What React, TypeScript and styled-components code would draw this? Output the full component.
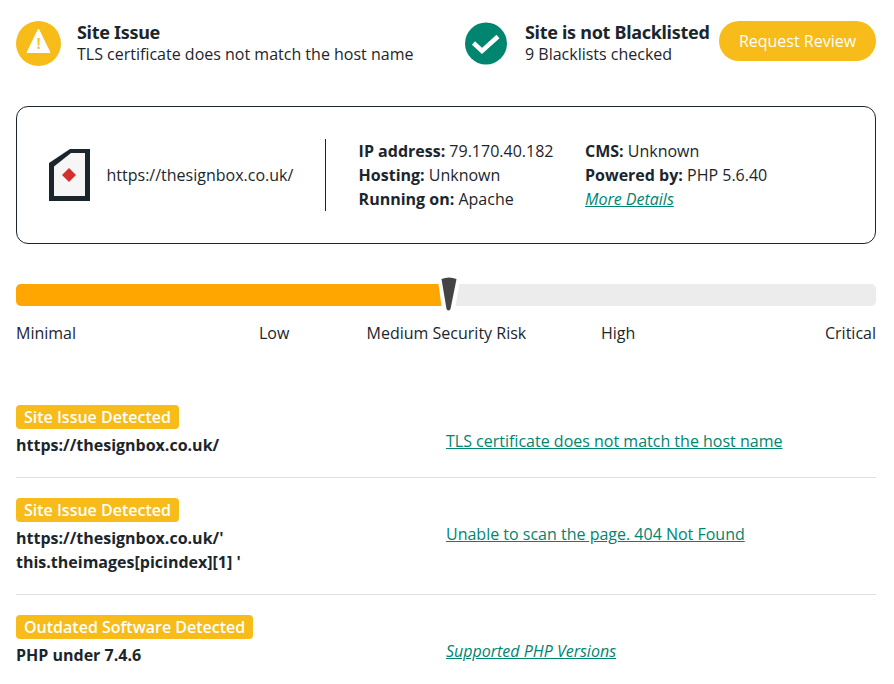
import React from "react";
import styled, { createGlobalStyle } from "styled-components";

const Global = createGlobalStyle`
  html, body { margin: 0; padding: 0; background: #fff; }
  body { font-family: "Open Sans", "Noto Sans", sans-serif; color: #1b262c; font-size: 16px; }
`;

const Page = styled.div`
  width: 860px;
  padding: 21px 18px 0 16px;
  height: 663px;
  overflow: hidden;
`;

const TopRow = styled.div`
  display: flex;
  align-items: flex-start;
  height: 45px;
`;

const Status = styled.div<{ $width: number }>`
  display: flex;
  align-items: center;
  gap: ${(p) => (p.$width > 300 ? 16 : 18)}px;
  width: ${(p) => p.$width}px;
  height: 45px;
`;

const StatusText = styled.div`
  display: flex;
  flex-direction: column;
  white-space: nowrap;
  padding-bottom: 2px;
`;

const StatusTitle = styled.div`
  font-family: "Noto Sans", sans-serif;
  font-weight: 700;
  font-size: 18px;
  letter-spacing: -0.3px;
  line-height: 22px;
`;

const StatusSub = styled.div`
  font-size: 16px;
  line-height: 22px;
`;

const Button = styled.button`
  width: 157px;
  height: 40px;
  margin-left: auto;
  border: 0;
  border-radius: 20px;
  background: #f7bc19;
  color: #fff;
  font-family: "Open Sans", sans-serif;
  font-size: 16px;
  padding: 0;
`;

const Card = styled.div`
  margin-top: 40px;
  height: 136px;
  border: 1px solid #1b262c;
  border-radius: 12px;
  display: flex;
  align-items: center;
  padding-left: 32px;
`;

const UrlBlock = styled.div`
  display: flex;
  align-items: center;
  gap: 16.5px;
  width: 276px;
  height: 72px;
  border-right: 1px solid #1b262c;
`;

const InfoCol = styled.div<{ $width: number }>`
  width: ${(p) => p.$width}px;
  line-height: 24px;
  white-space: nowrap;
`;

const InfoWrap = styled.div`
  display: flex;
  padding-left: 32.6px;
`;

const InfoLine = styled.div``;

const Strong = styled.b`
  font-weight: 700;
`;

const DetailLink = styled.a`
  color: #00856f;
  font-style: italic;
  text-decoration: underline;
`;

const Meter = styled.div`
  margin-top: 40px;
  position: relative;
  height: 22px;
  background: #ececec;
  border-radius: 5px;
`;

const MeterFill = styled.div`
  height: 100%;
  background: #ffa600;
  border-radius: 5px 0 0 5px;
`;

const Needle = styled.svg`
  position: absolute;
  left: 421px;
  top: -8px;
`;

const Scale = styled.div`
  margin-top: 16px;
  display: grid;
  grid-template-columns: 243px 107.6px 234.4px 224px 51px;
  white-space: nowrap;
  line-height: 22px;
`;

const ScaleLabel = styled.span``;

const Issues = styled.div`
  margin-top: 41px;
`;

const Issue = styled.div<{ $last?: boolean }>`
  display: flex;
  padding: 20px 0;
  border-bottom: ${(p) => (p.$last ? "0" : "1px solid #e0e0e0")};
`;

const IssueLeft = styled.div`
  width: 430px;
`;

const Badge = styled.span`
  display: inline-block;
  height: 24px;
  line-height: 24px;
  padding: 0 8px;
  border-radius: 4px;
  background: #f7bc19;
  color: #fff;
  font-weight: 600;
  font-size: 16px;
  vertical-align: top;
`;

const IssueTarget = styled.div`
  font-weight: 700;
  font-size: 16px;
  line-height: 24px;
  margin-top: 4px;
`;

const IssueRight = styled.div`
  display: flex;
  align-items: flex-start;
  padding-top: 24px;
  line-height: 24px;
`;

const IssueLink = styled.a<{ $italic?: boolean }>`
  color: #00856f;
  text-decoration: underline;
  font-style: ${(p) => (p.$italic ? "italic" : "normal")};
`;

const WarnIcon = () => (
  <svg width="45" height="45" viewBox="0 0 45 45" style={{ flex: "none" }}>
    <circle cx="22.5" cy="22.5" r="22.5" fill="#f7bc19" />
    <path d="M22.5 8 L34 31.5 H11 Z" fill="#fff" stroke="#fff" strokeWidth="1" strokeLinejoin="round" />
    <path d="M21.4 17 h2.2 l-.4 7.5 h-1.4 Z" fill="#f7bc19" />
    <rect x="21.4" y="25.6" width="2.2" height="2.2" fill="#f7bc19" />
  </svg>
);

const CheckIcon = () => (
  <svg width="42" height="43" viewBox="0 0 42 43" style={{ flex: "none" }}>
    <circle cx="21" cy="21.5" r="21" fill="#00856f" />
    <path d="M8.5 21 L17 29 L33 14.5" fill="none" stroke="#fff" strokeWidth="4.5" />
  </svg>
);

const SiteLogo = () => (
  <svg width="41" height="52" viewBox="0 0 41 52" style={{ flex: "none" }}>
    <path d="M21 0 H41 V52 H0 V14 Z" fill="#1b262c" />
    <path d="M22 4 H36 V47 H5 V17.5 Z" fill="#f6f6f6" />
    <path d="M20 19 L27 26 L20 33 L13 26 Z" fill="#d32f2f" />
  </svg>
);

export default function App() {
  return (
    <>
      <Global />
      <Page>
        <TopRow>
          <Status $width={449}>
            <WarnIcon />
            <StatusText>
              <StatusTitle>Site Issue</StatusTitle>
              <StatusSub>TLS certificate does not match the host name</StatusSub>
            </StatusText>
          </Status>
          <Status $width={240}>
            <CheckIcon />
            <StatusText>
              <StatusTitle>Site is not Blacklisted</StatusTitle>
              <StatusSub>9 Blacklists checked</StatusSub>
            </StatusText>
          </Status>
          <Button>Request Review</Button>
        </TopRow>

        <Card>
          <UrlBlock>
            <SiteLogo />
            <span>https://thesignbox.co.uk/</span>
          </UrlBlock>
          <InfoWrap>
            <InfoCol $width={226.4}>
              <InfoLine><Strong>IP address:</Strong> 79.170.40.182</InfoLine>
              <InfoLine><Strong>Hosting:</Strong> Unknown</InfoLine>
              <InfoLine><Strong>Running on:</Strong> Apache</InfoLine>
            </InfoCol>
            <InfoCol $width={220}>
              <InfoLine><Strong>CMS:</Strong> Unknown</InfoLine>
              <InfoLine><Strong>Powered by:</Strong> PHP 5.6.40</InfoLine>
              <InfoLine><DetailLink>More Details</DetailLink></InfoLine>
            </InfoCol>
          </InfoWrap>
        </Card>

        <Meter>
          <MeterFill style={{ width: `${(426 / 860) * 100}%` }} />
          <Needle width="24" height="36" viewBox="0 0 24 36">
            <path d="M1.5 8 L4.5 30 L18.5 30 L22.5 8 Z" fill="#fff" />
            <path d="M4.5 3 Q12 0 19.5 3 L13.5 33 Q11.5 36 9.5 33 Z" fill="#444" />
          </Needle>
        </Meter>
        <Scale>
          <ScaleLabel>Minimal</ScaleLabel>
          <ScaleLabel>Low</ScaleLabel>
          <ScaleLabel>Medium Security Risk</ScaleLabel>
          <ScaleLabel>High</ScaleLabel>
          <ScaleLabel>Critical</ScaleLabel>
        </Scale>

        <Issues>
          <Issue>
            <IssueLeft>
              <Badge>Site Issue Detected</Badge>
              <IssueTarget>https://thesignbox.co.uk/</IssueTarget>
            </IssueLeft>
            <IssueRight>
              <IssueLink>TLS certificate does not match the host name</IssueLink>
            </IssueRight>
          </Issue>
          <Issue>
            <IssueLeft>
              <Badge>Site Issue Detected</Badge>
              <IssueTarget>https://thesignbox.co.uk/'<br />this.theimages[picindex][1] '</IssueTarget>
            </IssueLeft>
            <IssueRight>
              <IssueLink>Unable to scan the page. 404 Not Found</IssueLink>
            </IssueRight>
          </Issue>
          <Issue $last>
            <IssueLeft>
              <Badge>Outdated Software Detected</Badge>
              <IssueTarget>PHP under 7.4.6</IssueTarget>
            </IssueLeft>
            <IssueRight>
              <IssueLink $italic>Supported PHP Versions</IssueLink>
            </IssueRight>
          </Issue>
        </Issues>
      </Page>
    </>
  );
}
